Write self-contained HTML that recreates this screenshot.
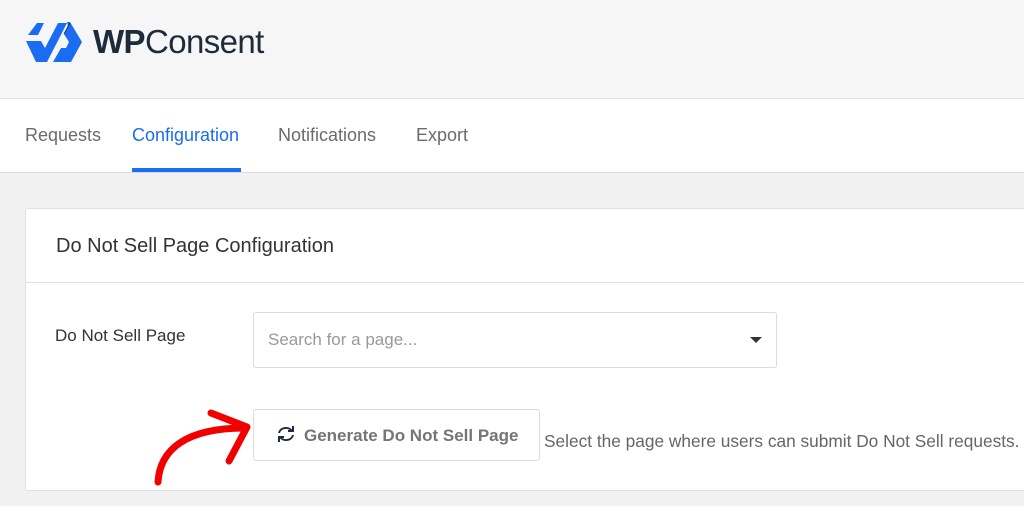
<!DOCTYPE html>
<html><head><meta charset="utf-8"><style>
body{margin:0;width:1024px;height:506px;overflow:hidden;background:#f1f1f2;font-family:"Liberation Sans",sans-serif;position:relative}
.hdr{position:absolute;left:0;top:0;width:1024px;height:98px;background:#f6f6f6;border-bottom:1px solid #e2e2e2}
.tabs{position:absolute;left:0;top:99px;width:1024px;height:73px;background:#fff;border-bottom:1px solid #dcdcde}
.tab{position:absolute;top:26px;font-size:18px;color:#6b6b6b}
.card{position:absolute;left:25px;top:208px;width:1010px;height:281px;background:#fff;border:1px solid #e0e0e0;border-radius:3px}
.ch{height:73px;border-bottom:1px solid #e0e0e0}
</style></head><body>
<div class="hdr">
<svg style="position:absolute;left:0;top:0" width="90" height="70" viewBox="0 0 90 70" fill="#1a6cf2">
<path d="M37 23H44L38 35H28Z"/>
<path d="M26 41H41L45 48L58 23H67L47 62H36Z"/>
<path d="M67 22H70L82 42L71 62H53L61 48H66L69 42L64 34L68 27Z"/>
<path d="M64 34L70 23" stroke="#12356b" stroke-width="1"/>
</svg>
<div style="position:absolute;left:93px;top:23px;font-size:33px;color:#1d2b3a;letter-spacing:-0.6px"><span style="font-weight:600">WP</span>Consent</div>
</div>
<div class="tabs">
<div class="tab" style="left:25px">Requests</div>
<div class="tab" style="left:132px;color:#1a6cf2">Configuration</div>
<div style="position:absolute;left:132px;top:69px;width:109px;height:4px;background:#1a6cf2"></div>
<div class="tab" style="left:278px">Notifications</div>
<div class="tab" style="left:416px">Export</div>
</div>
<div class="card"><div class="ch"><div style="position:absolute;left:30px;top:26px;font-size:20px;color:#333">Do Not Sell Page Configuration</div></div></div>
<div style="position:absolute;left:55px;top:326px;font-size:17px;color:#333">Do Not Sell Page</div>
<div style="position:absolute;left:253px;top:312px;width:522px;height:54px;border:1px solid #dcdcde;border-radius:3px;background:#fff">
<div style="position:absolute;left:14px;top:17px;font-size:17px;color:#999">Search for a page...</div>
<div style="position:absolute;right:14px;top:24px;border-left:6px solid transparent;border-right:6px solid transparent;border-top:6px solid #333"></div></div>
<div style="position:absolute;left:253px;top:409px;width:285px;height:50px;border:1px solid #dcdcde;border-radius:3px;background:#fff">
<svg style="position:absolute;left:22px;top:15px" width="20" height="18" viewBox="0 0 20 18" fill="none" stroke="#1d2b3a" stroke-width="2"><path d="M3 8A7 6 0 0 1 16 6"/><path d="M17 10A7 6 0 0 1 4 12"/><path d="M12 6H17V1" /><path d="M8 12H3V17"/></svg>
<div style="position:absolute;left:50px;top:16px;font-size:17px;font-weight:bold;color:#757575">Generate Do Not Sell Page</div></div>
<div style="position:absolute;left:544px;top:431px;font-size:17.3px;color:#666">Select the page where users can submit Do Not Sell requests.</div>
<svg style="position:absolute;left:0;top:0" width="1024" height="506" fill="none" stroke="#f20000" stroke-width="7" stroke-linecap="round" stroke-linejoin="round"><path d="M158 482C160 450 185 428 245 428"/><path d="M211 413L247 427L229 461"/></svg>
</body></html>
